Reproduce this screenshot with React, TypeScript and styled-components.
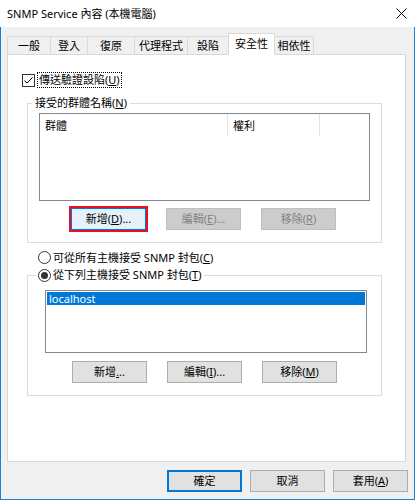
import React from "react";
import styled, { createGlobalStyle, css } from "styled-components";

const GlobalStyle = createGlobalStyle`
  html, body { margin: 0; padding: 0; background: #f0f0f0; }
  body {
    font-family: "Noto Sans", "Noto Sans CJK TC", sans-serif;
    font-size: 11px;
    color: #000;
  }
  * { box-sizing: border-box; }
`;

const Window = styled.div`
  width: 415px;
  height: 500px;
  display: flex;
  flex-direction: column;
  background: #f0f0f0;
  overflow: hidden;
`;

const TitleBar = styled.div`
  flex: none;
  height: 27px;
  background: #fff;
  display: flex;
  align-items: center;
  padding-left: 7px;
`;

const Title = styled.div`
  flex: 1;
  line-height: 16px;
  margin-top: 1px;
`;

const CloseButton = styled.div`
  width: 28px;
  height: 27px;
  display: flex;
  align-items: center;
  justify-content: center;
`;

const Frame = styled.div`
  flex: 1;
  display: flex;
  flex-direction: column;
  border: 1px solid #1b7fd6;
  border-top: none;
  padding: 6px 6px 7px 6px;
`;

const TabStrip = styled.div`
  position: relative;
  z-index: 1;
  height: 22px;
  margin-bottom: -1px;
  display: flex;
  align-items: flex-end;
`;

const Tab = styled.div<{ $w: number; $active?: boolean }>`
  width: ${(p) => p.$w}px;
  flex: none;
  display: flex;
  align-items: center;
  justify-content: center;
  border: 1px solid #d9d9d9;
  border-bottom: none;
  white-space: nowrap;
  line-height: 14px;
  & + & { margin-left: -1px; }
  ${(p) =>
    p.$active
      ? css`
          height: 22px;
          background: #fff;
          position: relative;
          z-index: 1;
          padding-bottom: 1px;
        `
      : css`
          height: 18px;
          margin-bottom: 1px;
          background: #f0f0f0;
        `}
`;

const Panel = styled.div`
  flex: none;
  width: 399px;
  height: 408px;
  background: #fff;
  border: 1px solid #d9d9d9;
  padding-left: 14px;
  display: flex;
  flex-direction: column;
  align-items: flex-start;
`;

const CheckRow = styled.div`
  margin-top: 17px;
  height: 16px;
  display: flex;
  align-items: center;
  gap: 2px;
`;

const CheckBox = styled.span`
  width: 13px;
  height: 13px;
  border: 1px solid #333;
  background: #fff;
  display: flex;
  align-items: center;
  justify-content: center;
`;

const FocusLabel = styled.span`
  height: 16px;
  line-height: 14px;
  padding: 0 1px;
  border: 1px dotted #000;
`;

const Group = styled.section<{ $top: number }>`
  margin: ${(p) => p.$top}px 0 0 5px;
  width: 355px;
  padding: 0 0 12px 0;
  border: 1px solid #dcdcdc;
  display: flex;
  flex-direction: column;
  align-items: flex-start;
`;

const Legend = styled.div<{ $offset: number; $pad: number }>`
  margin: -9px 0 0 ${(p) => p.$offset}px;
  padding: 0 ${(p) => p.$pad}px;
  height: 16px;
  line-height: 16px;
  background: #fff;
  display: flex;
  align-items: center;
  gap: 2px;
  white-space: nowrap;
`;

const ListView = styled.div`
  margin: 2px 0 0 11px;
  width: 331px;
  height: 88px;
  border: 1px solid #828790;
  background: #fff;
`;

const ListHeader = styled.div`
  height: 22px;
  display: grid;
  grid-template-columns: 188px 92px 1fr;
`;

const HeaderCell = styled.div<{ $divider?: boolean }>`
  display: flex;
  align-items: center;
  padding-left: 5px;
  border-right: ${(p) => (p.$divider ? "1px solid #e5e5e5" : "none")};
`;

const ButtonRow = styled.div<{ $top: number; $left: number }>`
  margin: ${(p) => p.$top}px 0 0 ${(p) => p.$left}px;
  display: flex;
  gap: 20px;
`;

type Variant = "normal" | "disabled" | "focused" | "marked";

const Button = styled.div<{ $variant?: Variant }>`
  width: 75px;
  height: 22px;
  display: flex;
  align-items: center;
  justify-content: center;
  white-space: nowrap;
  border: 1px solid #adadad;
  background: #e1e1e1;
  color: #000;
  line-height: 14px;
  ${(p) =>
    p.$variant === "disabled" &&
    css`
      background: #cccccc;
      border-color: #bfbfbf;
      color: #838383;
    `}
  ${(p) =>
    p.$variant === "focused" &&
    css`
      border: 2px solid #0078d7;
    `}
  ${(p) =>
    p.$variant === "marked" &&
    css`
      background: #e5f1fb;
      border-color: #0078d7;
      outline: 2px solid #e81123;
      outline-offset: 0;
    `}
`;

const RadioRow = styled.div`
  margin: 6px 0 0 16px;
  height: 16px;
  display: flex;
  align-items: center;
  gap: 2px;
`;

const Radio = styled.span<{ $checked?: boolean }>`
  width: 13px;
  height: 13px;
  flex: none;
  border-radius: 50%;
  border: 1px solid #333;
  background: #fff;
  display: flex;
  align-items: center;
  justify-content: center;
  &::after {
    content: "";
    display: ${(p) => (p.$checked ? "block" : "none")};
    width: 7px;
    height: 7px;
    border-radius: 50%;
    background: #333;
  }
`;

const ListBox = styled.div`
  margin: 7px 0 0 17px;
  width: 322px;
  height: 63px;
  border: 1px solid #828790;
  background: #fff;
  padding: 1px;
`;

const ListItem = styled.div<{ $selected?: boolean }>`
  height: 13px;
  line-height: 13px;
  padding-left: 2px;
  background: ${(p) => (p.$selected ? "#0078d7" : "transparent")};
  color: ${(p) => (p.$selected ? "#fff" : "#000")};
`;

const ButtonBar = styled.div`
  margin-top: 8px;
  display: flex;
  justify-content: flex-end;
  gap: 8px;
`;

const tabs = [
  { label: "一般", w: 44 },
  { label: "登入", w: 38 },
  { label: "復原", w: 48 },
  { label: "代理程式", w: 54 },
  { label: "設陷", w: 42 },
  { label: "安全性", w: 47, active: true },
  { label: "相依性", w: 40 },
];

export default function App() {
  return (
    <>
      <GlobalStyle />
      <Window>
        <TitleBar>
          <Title>SNMP Service 內容 (本機電腦)</Title>
          <CloseButton>
            <svg width="11" height="11" viewBox="0 0 11 11">
              <path d="M0.5 0.5 L10.5 10.5 M10.5 0.5 L0.5 10.5" stroke="#000" strokeWidth="1" />
            </svg>
          </CloseButton>
        </TitleBar>
        <Frame>
          <TabStrip>
            {tabs.map((t) => (
              <Tab key={t.label} $w={t.w} $active={t.active}>
                {t.label}
              </Tab>
            ))}
          </TabStrip>
          <Panel>
            <CheckRow>
              <CheckBox>
                <svg width="11" height="11" viewBox="0 0 11 11">
                  <path d="M1.5 5.5 L4 8 L9.5 2.5" stroke="#000" strokeWidth="1" fill="none" />
                </svg>
              </CheckBox>
              <FocusLabel>
                傳送驗證設陷(<u>U</u>)
              </FocusLabel>
            </CheckRow>

            <Group $top={15}>
              <Legend $offset={4} $pad={3}>
                <span>
                  接受的群體名稱(<u>N</u>)
                </span>
              </Legend>
              <ListView>
                <ListHeader>
                  <HeaderCell $divider>群體</HeaderCell>
                  <HeaderCell $divider>權利</HeaderCell>
                  <HeaderCell />
                </ListHeader>
              </ListView>
              <ButtonRow $top={7} $left={43}>
                <Button $variant="marked">
                  新增(<u>D</u>)...
                </Button>
                <Button $variant="disabled">
                  編輯(<u>E</u>)...
                </Button>
                <Button $variant="disabled">
                  移除(<u>R</u>)
                </Button>
              </ButtonRow>
            </Group>

            <RadioRow>
              <Radio />
              <span>
                可從所有主機接受 SNMP 封包(<u>C</u>)
              </span>
            </RadioRow>

            <Group $top={10}>
              <Legend $offset={8} $pad={2}>
                <Radio $checked />
                <span>
                  從下列主機接受 SNMP 封包(<u>T</u>)
                </span>
              </Legend>
              <ListBox>
                <ListItem $selected>localhost</ListItem>
              </ListBox>
              <ButtonRow $top={8} $left={44}>
                <Button>
                  新增<u>.</u>..
                </Button>
                <Button>
                  編輯(<u>I</u>)...
                </Button>
                <Button>
                  移除(<u>M</u>)
                </Button>
              </ButtonRow>
            </Group>
          </Panel>
          <ButtonBar>
            <Button $variant="focused">確定</Button>
            <Button>取消</Button>
            <Button>
              套用(<u>A</u>)
            </Button>
          </ButtonBar>
        </Frame>
      </Window>
    </>
  );
}
